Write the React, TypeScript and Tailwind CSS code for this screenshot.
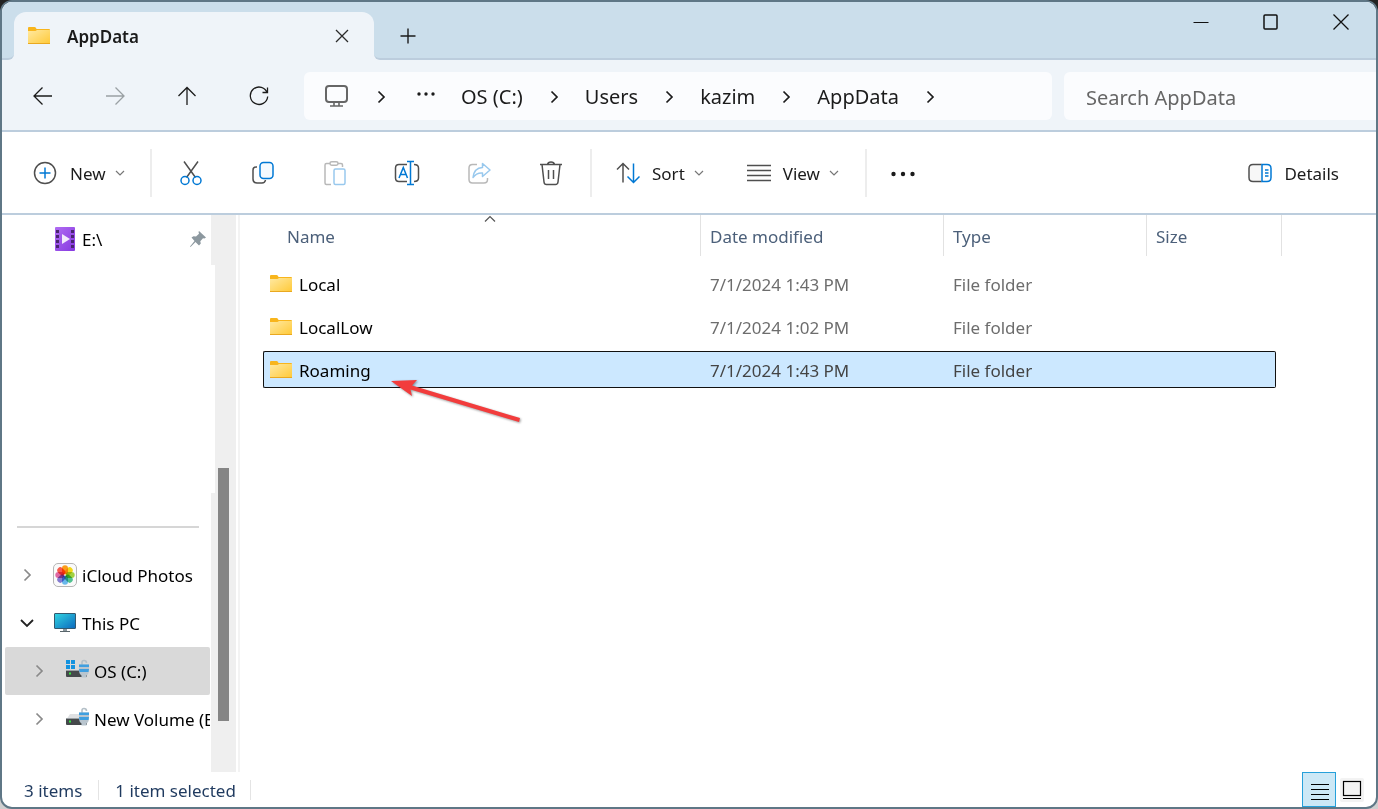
import type { ReactNode } from 'react';
import { clsx } from 'clsx';

type FileRow = {
  name: string;
  modified: string;
  type: string;
  selected?: boolean;
};

const FILES: FileRow[] = [
  { name: 'Local', modified: '7/1/2024 1:43 PM', type: 'File folder' },
  { name: 'LocalLow', modified: '7/1/2024 1:02 PM', type: 'File folder' },
  { name: 'Roaming', modified: '7/1/2024 1:43 PM', type: 'File folder', selected: true },
];

const CRUMBS = ['OS (C:)', 'Users', 'kazim', 'AppData'];

function FolderIcon() {
  return (
    <svg width="24" height="20" viewBox="0 0 24 20" className="shrink-0" aria-hidden="true">
      <defs>
        <linearGradient id="folder" x1="0" y1="0" x2="1" y2="1">
          <stop offset="0" stopColor="#ffe9a2" />
          <stop offset="1" stopColor="#ffc937" />
        </linearGradient>
      </defs>
      <path d="M1 2Q1 1 2 1H7.500Q8.500 1 9 2L9.500 3H22Q23 3 23 4V8H1Z" fill="#f8b51c" />
      <path d="M1 5H8.500L10 4H23V17Q23 18 22 18H2Q1 18 1 17Z" fill="url(#folder)" />
      <path d="M1 17.500H23" stroke="#e9a820" />
    </svg>
  );
}

function Chevron({ dir, className }: { dir: 'right' | 'down' | 'up'; className?: string }) {
  if (dir === 'right') {
    return (
      <svg width="9" height="14" viewBox="0 0 9 14" fill="none" stroke="currentColor" className={clsx('shrink-0', className)} aria-hidden="true">
        <path d="M1.500 1.500L7 7L1.500 12.500" strokeWidth="1.700" />
      </svg>
    );
  }
  return (
    <svg width="12" height="8" viewBox="0 0 12 8" fill="none" stroke="currentColor" className={clsx('shrink-0', className)} aria-hidden="true">
      <path d={dir === 'down' ? 'M2 2L6 6L10 2' : 'M1 6.500L6 1.500L11 6.500'} strokeWidth="1.200" />
    </svg>
  );
}

function Stroke({ size = 24, width = 1.5, children }: { size?: number; width?: number; children: ReactNode }) {
  return (
    <svg width={size} height={size} viewBox={`0 0 ${size} ${size}`} fill="none" stroke="currentColor" strokeWidth={width} className="shrink-0" aria-hidden="true">
      {children}
    </svg>
  );
}

function DriveIcon({ system }: { system?: boolean }) {
  return (
    <svg width="24" height="24" viewBox="0 0 24 24" className="shrink-0" aria-hidden="true">
      {system ? (
        <path d="M1 1h4v4H1zM6 1h4v4H6zM1 6h4v4H1zM6 6h4v4H6z" fill="#1493df" />
      ) : (
        <path d="M5 7H20L23 13H1Z" fill="#dfe1e3" />
      )}
      <path d="M1 12H22V17Q22 18 21 18H2Q1 18 1 17Z" fill="#45494b" />
      <path d="M1 11.500H14" stroke="#9aa0a3" />
      <rect x="4" y="13.500" width="2" height="2" fill="#35e83f" />
      <path d="M17 7V3.500Q17 1.500 19 1.500Q21.500 1.500 21.500 4" fill="none" stroke="#b4c0c8" strokeWidth="1.600" />
      <path d="M14 5.500H24V11Q24 15 21.500 16.500V18.500H16.500V16.500Q14 15 14 11Z" fill="#b9c5ce" />
      <path d="M14 5.500H24V8H14ZM14 10H24L23.500 13H14.500Z" fill="#3f9fe0" />
    </svg>
  );
}

const PETALS = [
  { angle: 0, fill: '#ff9500' },
  { angle: 45, fill: '#f6d800' },
  { angle: 90, fill: '#9bd12c' },
  { angle: 135, fill: '#3fbf87' },
  { angle: 180, fill: '#5bb5ee' },
  { angle: 225, fill: '#7a6fd0' },
  { angle: 270, fill: '#e05a9c' },
  { angle: 315, fill: '#fb4b3b' },
];

function PhotosIcon() {
  return (
    <svg width="24" height="24" viewBox="0 0 24 24" className="shrink-0" aria-hidden="true">
      <rect x="0.500" y="0.500" width="23" height="23" rx="4.500" fill="#fafafa" stroke="#b5b5b5" />
      {PETALS.map((p) => (
        <rect key={p.angle} x="9" y="2.300" width="6" height="8.900" rx="3" fill={p.fill} className="mix-blend-multiply" fillOpacity="0.900" transform={`rotate(${p.angle} 12 12)`} />
      ))}
    </svg>
  );
}

function ThisPcIcon() {
  return (
    <svg width="24" height="22" viewBox="0 0 24 22" className="shrink-0" aria-hidden="true">
      <defs>
        <linearGradient id="pc" x1="0" y1="0" x2="1" y2="1">
          <stop offset="0" stopColor="#31d5e2" />
          <stop offset="1" stopColor="#0b68bd" />
        </linearGradient>
      </defs>
      <rect x="1.500" y="1.500" width="21" height="15" rx="0.500" fill="url(#pc)" stroke="#33596f" />
      <path d="M10 17H14V19H10Z" fill="#8b979d" />
      <path d="M7 19.500H17" stroke="#59656b" />
    </svg>
  );
}

function VideoIcon() {
  return (
    <svg width="20" height="24" viewBox="0 0 20 24" className="shrink-0" aria-hidden="true">
      <defs>
        <linearGradient id="video" x1="0" y1="0" x2="1" y2="1">
          <stop offset="0" stopColor="#b06cf2" />
          <stop offset="1" stopColor="#8639e0" />
        </linearGradient>
      </defs>
      <rect width="20" height="24" rx="1" fill="url(#video)" />
      <path d="M1 3h3v3H1zM1 8h3v3H1zM1 13h3v3H1zM1 18h3v3H1zM16 3h3v3h-3zM16 8h3v3h-3zM16 13h3v3h-3zM16 18h3v3h-3z" fill="#4a2670" />
      <path d="M7 7L15 12L7 17Z" fill="#f3eafc" />
    </svg>
  );
}

function NavButton({ label, disabled, children }: { label: string; disabled?: boolean; children: ReactNode }) {
  return (
    <button type="button" aria-label={label} disabled={disabled} className="flex h-12 w-[72px] items-center justify-center text-[#1b1b1b] disabled:text-[#9aa0a4]">
      <Stroke size={22} width={1.3}>{children}</Stroke>
    </button>
  );
}

function ToolButton({ label, disabled, children }: { label: string; disabled?: boolean; children: ReactNode }) {
  return (
    <button type="button" aria-label={label} disabled={disabled} className="flex h-12 w-[72px] items-center justify-center text-[#4f4f4f] disabled:opacity-40">
      <Stroke size={26}>{children}</Stroke>
    </button>
  );
}

function TitleBar() {
  return (
    <header className="flex h-[58px] bg-[#eff4f9]">
      <div className="w-3 rounded-br-md border-b-2 border-[#bccddd] bg-[#cbdeeb]" />
      <div className="w-[360px] bg-[#cbdeeb] pt-2.5">
        <div className="flex h-full items-center rounded-t-xl bg-[#eff4f9] pr-5 pl-[13px]">
          <FolderIcon />
          <span className="mt-0.5 ml-4 flex-1 text-[17px] font-semibold text-[#1b1b1b]">AppData</span>
          <button type="button" aria-label="Close tab" className="flex h-6 w-6 items-center justify-center text-[#2b2b2b]">
            <Stroke size={16} width={1.3}>
              <path d="M2 2L14 14M14 2L2 14" />
            </Stroke>
          </button>
        </div>
      </div>
      <div className="flex flex-1 items-start justify-between rounded-bl-md border-b-2 border-[#bccddd] bg-[#cbdeeb]">
        <button type="button" aria-label="New tab" className="mt-2.5 ml-4 flex h-12 w-9 items-center justify-center text-[#1b1b1b]">
          <Stroke size={16} width={1.4}>
            <path d="M8 0.500V15.500M0.500 8H15.500" />
          </Stroke>
        </button>
        <div className="flex text-[#111]">
          <button type="button" aria-label="Minimize" className="flex h-10 w-[70px] items-center justify-center">
            <Stroke size={16} width={1}><path d="M0.500 8.500H15.500" /></Stroke>
          </button>
          <button type="button" aria-label="Maximize" className="flex h-10 w-[70px] items-center justify-center">
            <Stroke size={16} width={1.5}><rect x="1" y="1" width="13" height="14" rx="1" /></Stroke>
          </button>
          <button type="button" aria-label="Close" className="flex h-10 w-[70px] items-center justify-center">
            <Stroke size={16} width={1.3}><path d="M0.500 0.500L15.500 15.500M15.500 0.500L0.500 15.500" /></Stroke>
          </button>
        </div>
      </div>
    </header>
  );
}

function AddressBar() {
  return (
    <div className="flex h-[72px] items-center border-b-2 border-[#bccddd] bg-[#eff4f9] pt-0.5 pl-[5px]">
      <NavButton label="Back"><path d="M20 11H2.500M10.500 2.500L2 11L10.500 19.500" /></NavButton>
      <NavButton label="Forward" disabled><path d="M2 11H19.500M11.500 2.500L20 11L11.500 19.500" /></NavButton>
      <NavButton label="Up"><path d="M11 20V2.500M2.500 11L11 2.500L19.500 11" /></NavButton>
      <NavButton label="Refresh">
        <path d="M19.300 8A8.700 8.700 0 1 0 19.700 11.500M19.500 2.500V7.500H14.500" />
      </NavButton>
      <nav aria-label="Breadcrumb" className="ml-[9px] flex h-12 flex-1 items-center rounded-md bg-[#fbfcfe] pl-5 text-[#1b1b1b]">
        <button type="button" aria-label="Computer" className="text-[#666]">
          <Stroke size={24} width={2}>
            <rect x="2" y="2" width="21" height="16" rx="3" />
            <path d="M10 18V22M15 18V22M6 22H19" strokeWidth="1.600" />
          </Stroke>
        </button>
        <Chevron dir="right" className="mt-0.5 ml-[29px]" />
        <button type="button" aria-label="More locations" className="mr-[26px] ml-[31px]">
          <svg width="18" height="18" viewBox="0 0 18 18" fill="currentColor" aria-hidden="true">
            <circle cx="2" cy="7" r="1.700" />
            <circle cx="9" cy="7" r="1.700" />
            <circle cx="16" cy="7" r="1.700" />
          </svg>
        </button>
        <ol className="flex items-center pt-0.5">
          {CRUMBS.map((crumb) => (
            <li key={crumb} className="flex items-center">
              <a href="#" className="text-[20px]">{crumb}</a>
              <Chevron dir="right" className="mr-[26px] ml-[27px]" />
            </li>
          ))}
        </ol>
      </nav>
      <input
        type="search"
        aria-label="Search AppData"
        placeholder="Search AppData"
        className="ml-3 h-12 w-[312px] rounded-l-md bg-[#fbfcfe] pt-0.5 pl-[22px] text-[20px] text-[#1b1b1b] outline-none placeholder:text-[#666]"
      />
    </div>
  );
}

function Divider() {
  return <div className="h-12 w-0.5 bg-[#ededed]" />;
}

function Toolbar() {
  return (
    <div className="flex h-[83px] items-center border-b-2 border-[#bccddd] bg-white text-[17px] text-[#1b1b1b]">
      <button type="button" className="flex h-12 w-[148px] items-center pl-[31px]">
        <span className="text-[#4f4f4f]">
          <Stroke>
            <circle cx="12" cy="12" r="10.500" />
            <path d="M12 6.500V17.500M6.500 12H17.500" stroke="#0078d4" />
          </Stroke>
        </span>
        <span className="mt-0.5 ml-[13px]">New</span>
        <Chevron dir="down" className="ml-2 text-[#777]" />
      </button>
      <Divider />
      <div className="flex px-[3px]">
        <ToolButton label="Cut">
          <path d="M6 1.500L17.500 17.500M20 1.500L8.500 17.500" />
          <circle cx="7" cy="20.500" r="4" stroke="#0078d4" />
          <circle cx="19" cy="20.500" r="4" stroke="#0078d4" />
        </ToolButton>
        <ToolButton label="Copy">
          <path d="M7 7H6Q3 7 3 10V19Q3 23 7 23H12Q15 23 15.500 20" />
          <rect x="10" y="2.500" width="13" height="16" rx="3.500" stroke="#0078d4" fill="#f5fafe" />
        </ToolButton>
        <ToolButton label="Paste" disabled>
          <path d="M8 3.500H4.500Q3 3.500 3 5V23Q3 24.500 4.500 24.500H9M16 3.500H19Q20.500 3.500 20.500 5V7" />
          <rect x="8" y="1.700" width="8" height="3.500" rx="1.700" />
          <rect x="12" y="9" width="11" height="15.500" rx="1.500" stroke="#0078d4" />
        </ToolButton>
        <ToolButton label="Rename">
          <path d="M13 4.500H5Q1.500 4.500 1.500 8V18Q1.500 21.500 5 21.500H13M20 4.500Q24.500 4.500 24.500 8V18Q24.500 21.500 20 21.500" />
          <path d="M5 18L9.300 7.500L13.500 18M6.500 14.500H12M16.500 1.500V24.500M13 1.500H20M13 24.500H20" stroke="#0078d4" />
        </ToolButton>
        <ToolButton label="Share" disabled>
          <path d="M11 4.500H6.500Q3 4.500 3 8V19.500Q3 23 6.500 23H18Q21.500 23 21.500 19.500V18" />
          <path d="M16.500 3.500L24 10L16.500 16.500V13Q10.500 12.500 7 17.500Q8 8 16.500 7.500Z" stroke="#0078d4" strokeLinejoin="round" />
        </ToolButton>
        <ToolButton label="Delete">
          <path d="M2 4.500H24M9.500 4.500Q10 2 13 2Q16 2 16.500 4.500M4 4.500L6 22Q6.300 24.500 8.500 24.500H17.500Q19.700 24.500 20 22L22 4.500M10.500 10V19M15.500 10V19" />
        </ToolButton>
      </div>
      <Divider />
      <button type="button" className="ml-6 flex h-12 items-center">
        <span className="text-[#4f4f4f]">
          <Stroke>
            <path d="M7 21.500V2.500M1 8.500L7 2.500L13 8.500" />
            <path d="M17.500 2.500V21.500M11.500 15.500L17.500 21.500L23.500 15.500" stroke="#0078d4" />
          </Stroke>
        </span>
        <span className="mt-0.5 ml-3">Sort</span>
        <Chevron dir="down" className="ml-2 text-[#777]" />
      </button>
      <button type="button" className="ml-[42px] flex h-12 items-center">
        <span className="text-[#4f4f4f]">
          <Stroke><path d="M0 4.500H24M0 9.500H24M0 14.500H24M0 19.500H24" /></Stroke>
        </span>
        <span className="mt-0.5 ml-3">View</span>
        <Chevron dir="down" className="mr-[25px] ml-2 text-[#777]" />
      </button>
      <Divider />
      <button type="button" aria-label="See more" className="ml-6">
        <svg width="26" height="24" viewBox="0 0 26 24" fill="#1b1b1b" aria-hidden="true">
          <circle cx="2.500" cy="13" r="2.200" />
          <circle cx="12" cy="13" r="2.200" />
          <circle cx="21.500" cy="13" r="2.200" />
        </svg>
      </button>
      <button type="button" className="mr-[37px] ml-auto flex h-12 items-center">
        <span className="text-[#4f4f4f]">
          <Stroke>
            <path d="M13.500 3.500H5Q1 3.500 1 7.500V16.500Q1 20.500 5 20.500H13.500" fill="#f7f7f7" />
            <path d="M14 3.500H19Q23 3.500 23 7.500V16.500Q23 20.500 19 20.500H14ZM17 9H20.500M17 12H20.500M17 15H20.500" stroke="#0078d4" />
          </Stroke>
        </span>
        <span className="mt-0.5 ml-3">Details</span>
      </button>
    </div>
  );
}

function TreeItem({ label, icon, level = 0, open, selected }: { label: string; icon: ReactNode; level?: 0 | 1; open?: boolean; selected?: boolean }) {
  return (
    <li>
      <button
        type="button"
        aria-expanded={!!open}
        className={clsx(
          'ml-[3px] flex h-12 w-[205px] items-center overflow-hidden rounded-xs whitespace-nowrap text-black',
          level === 1 ? 'pl-[26px]' : 'pl-3.5',
          selected && 'bg-[#d9d9d9]',
        )}
      >
        <span className="flex w-4 shrink-0 justify-center">
          {open ? (
            <svg width="14" height="9" viewBox="0 0 14 9" fill="none" stroke="#222" strokeWidth="1.800" aria-hidden="true">
              <path d="M1 1L7 7L13 1" />
            </svg>
          ) : (
            <Chevron dir="right" className="text-[#8a8a8a]" />
          )}
        </span>
        <span className="ml-[18px] flex shrink-0">{icon}</span>
        <span className="mt-0.5 ml-[5px]">{label}</span>
      </button>
    </li>
  );
}

function Sidebar() {
  return (
    <aside className="flex w-[238px] shrink-0 border-r-2 border-[#f3f3f3] text-[17px]">
      <div className="flex w-[234px] shrink-0 bg-[#efefef]">
        <nav aria-label="Folders" className="flex w-[213px] shrink-0 flex-col">
          <div className="h-[50px] w-[209px] bg-white">
            <a href="#" className="flex h-12 items-center pl-[53px] text-black">
              <VideoIcon />
              <span className="mt-0.5 ml-[7px] flex-1">E:\</span>
              <svg width="18" height="18" viewBox="0 0 18 18" fill="#8c989f" className="mr-1" aria-label="Pinned">
                <path d="M10 1L17 7.500L15.500 8.500L14 8.300L11.300 11.300L11.800 13.500L10 15.500L6.500 12L1.500 17L1 16.500L5.500 11L2.500 7.500L4.500 6.200L7 6.600L10 3.800L9.500 2Z" />
              </svg>
            </a>
          </div>
          <div className="h-[228px] w-[213px] bg-white" />
          <div className="w-[209px] flex-1 bg-white pt-[33px]">
            <hr className="mr-3 ml-[15px] border-t-2 border-[#d6d6d6]" />
            <ul className="mt-[23px]">
              <TreeItem label="iCloud Photos" icon={<PhotosIcon />} />
              <TreeItem label="This PC" icon={<ThisPcIcon />} open />
              <TreeItem label="OS (C:)" icon={<DriveIcon system />} level={1} selected />
              <TreeItem label="New Volume (E:)" icon={<DriveIcon />} level={1} />
            </ul>
          </div>
        </nav>
        <div className="mt-[253px] ml-[3px] h-[253px] w-[11px] bg-[#858585]" />
      </div>
    </aside>
  );
}

function FileTable() {
  return (
    <main className="relative flex-1 pr-[94px] pl-[23px]">
      <table className="w-full table-fixed border-separate border-spacing-0 text-left text-[17px]">
        <thead>
          <tr className="h-[41px] text-[#4c607a]">
            <th scope="col" aria-sort="ascending" className="relative p-0 pt-0.5 pl-6 font-normal">
              <Chevron dir="up" className="absolute top-0 left-1/2 ml-0.5 text-[#555]" />
              Name
            </th>
            <th scope="col" className="w-[243px] border-l border-[#e2e2e2] p-0 pt-0.5 pl-[9px] font-normal">Date modified</th>
            <th scope="col" className="w-[203px] border-l border-[#e2e2e2] p-0 pt-0.5 pl-[9px] font-normal">Type</th>
            <th scope="col" className="w-[136px] border-x border-[#e2e2e2] p-0 pt-0.5 pl-[9px] font-normal">Size</th>
          </tr>
        </thead>
        <tbody className="before:block before:h-[9px]">
          {FILES.map((file) => {
            const cell = clsx(
              'flex h-[37px] items-center border-y',
              file.selected ? 'border-[#111] bg-[#cce8ff] text-[#444]' : 'border-transparent text-[#6d6d6d]',
            );

            return (
              <tr key={file.name} aria-selected={!!file.selected}>
                <td className="p-0 pb-1.5">
                  <div className={clsx(cell, 'rounded-l-xs border-l pl-[5px]')}>
                    <FolderIcon />
                    <span className="mt-[3px] ml-1.5 text-black">{file.name}</span>
                  </div>
                </td>
                <td className="p-0 pb-1.5">
                  <div className={clsx(cell, 'pt-[3px] pl-2.5')}>{file.modified}</div>
                </td>
                <td className="p-0 pb-1.5">
                  <div className={clsx(cell, 'pt-[3px] pl-2.5')}>{file.type}</div>
                </td>
                <td className="p-0 pb-1.5">
                  <div className={clsx(cell, 'mr-1.5 rounded-r-xs border-r')} />
                </td>
              </tr>
            );
          })}
        </tbody>
      </table>

      {/* callout pointing at the Roaming folder */}
      <svg width="134" height="48" viewBox="0 0 134 48" className="absolute top-[162px] left-[150px] drop-shadow-[1px_1px_1px_rgba(0,0,0,0.4)]" aria-hidden="true">
        <path d="M1 4L27 3L22 8.500L130 41L129 45L20.500 12.500L22 19Z" fill="#f23c3c" />
      </svg>
    </main>
  );
}

function StatusBar() {
  return (
    <footer className="flex h-[35px] items-center pl-[22px] text-[17px] text-[#1f3a5f]">
      <span className="mt-0.5">3 items</span>
      <span className="mx-4 h-5 w-px bg-[#e4e4e4]" />
      <span className="mt-0.5">1 item selected</span>
      <span className="ml-3.5 h-5 w-px bg-[#e4e4e4]" />
      <div className="mr-3 ml-auto flex h-full items-center gap-1">
        <button type="button" aria-label="Details view" aria-pressed="true" className="flex h-full w-[34px] items-center justify-center border border-[#26a0da] bg-[#cce8f6] pt-1 pl-0.5 text-black">
          <Stroke size={20} width={1}><path d="M1 2.500H19M1 7.500H19M1 12.500H19M1 17.500H19" /></Stroke>
        </button>
        <button type="button" aria-label="Thumbnail view" aria-pressed="false" className="flex h-6 w-6 items-center justify-center rounded-xs bg-[#f3f3f3] text-black">
          <Stroke size={20} width={1.2}>
            <rect x="1.500" y="1.500" width="17" height="14" />
            <path d="M1 18.500H19" />
          </Stroke>
        </button>
      </div>
    </footer>
  );
}

export default function App() {
  return (
    <div className="flex min-h-screen bg-linear-to-b from-[#222] to-[#d0d0d0] font-['Noto_Sans','Open_Sans',sans-serif]">
      <div className="flex flex-1 flex-col overflow-hidden rounded-xl border-2 border-[#5f7786] bg-white">
        <TitleBar />
        <AddressBar />
        <Toolbar />
        <div className="flex flex-1">
          <Sidebar />
          <FileTable />
        </div>
        <StatusBar />
      </div>
    </div>
  );
}
